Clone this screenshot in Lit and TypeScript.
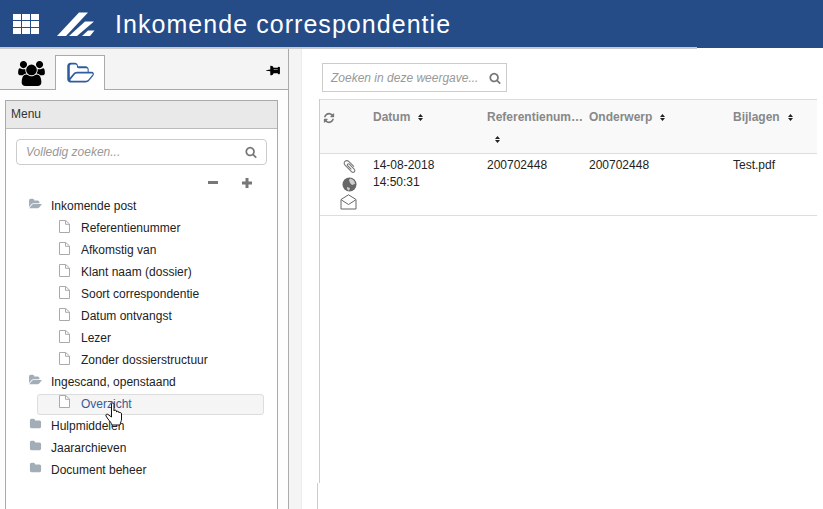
import { LitElement, html, css } from "lit";
import { customElement } from "lit/decorators.js";

const P = {
  users: "M593 896q-162 5-265 128h-134q-82 0-138-40.500t-56-118.500q0-353 124-353 6 0 43.500 21t97.500 42.500 119 21.500q67 0 133-23-5 37-5 66 0 139 81 256zm1071 637q0 120-73 189.500t-194 69.500h-874q-121 0-194-69.500t-73-189.500q0-53 3.500-103.500t14-109 26.500-108.500 43-97.500 62-81 85.500-53.500 111.500-20q10 0 43 21.500t73 48 107 48 135 21.500 135-21.500 107-48 73-48 43-21.500q61 0 111.500 20t85.500 53.500 62 81 43 97.500 26.500 108.500 14 109 3.500 103.500zm-1024-1277q0 106-75 181t-181 75-181-75-75-181 75-181 181-75 181 75 75 181zm704 384q0 159-112.500 271.500t-271.500 112.500-271.500-112.500-112.500-271.500 112.500-271.500 271.500-112.500 271.500 112.500 112.500 271.500zm576 225q0 78-56 118.500t-138 40.500h-134q-103-123-265-128 81-117 81-256 0-29-5-66 66 23 133 23 59 0 119-21.500t97.500-42.500 43.500-21q124 0 124 353zm-128-609q0 106-75 181t-181 75-181-75-75-181 75-181 181-75 181 75 75 181z",
  folderOpenO: "M1845 931q0-35-53-35h-1088q-40 0-85.500 21.500t-71.500 52.500l-294 363q-18 24-18 40 0 35 53 35h1088q40 0 86-22t71-53l294-363q18-22 18-39zm-1141-163h768v-160q0-40-28-68t-68-28h-576q-40 0-68-28t-28-68v-64q0-40-28-68t-68-28h-320q-40 0-68 28t-28 68v853l256-315q44-53 116-87.500t140-34.500zm1216 163q0 62-46 120l-295 363q-43 53-116 87.500t-140 34.500h-1088q-92 0-158-66t-66-158v-960q0-92 66-158t158-66h320q92 0 158 66t66 158v32h544q92 0 158 66t66 158v160h192q54 0 99 24.500t67 70.500q15 32 15 68z",
  folderOpen: "M1879 952q0 31-31 66l-336 396q-43 51-120.500 86.500t-143.500 35.500h-1088q-34 0-60.500-13t-26.500-43q0-31 31-66l336-396q43-51 120.500-86.500t143.500-35.500h1088q34 0 60.500 13t26.500 43zm-343-344v160h-832q-94 0-197 47.500t-164 119.500l-337 396-5 6q0-4-.5-12.500t-.5-12.500v-960q0-92 66-158t158-66h320q92 0 158 66t66 158v32h544q92 0 158 66t66 158z",
  folder: "M1728 608v704q0 92-66 158t-158 66h-1216q-92 0-158-66t-66-158v-960q0-92 66-158t158-66h320q92 0 158 66t66 158v32h672q92 0 158 66t66 158z",
  search: "M1216 832q0-185-131.500-316.500t-316.500-131.500-316.500 131.500-131.500 316.500 131.500 316.500 316.500 131.500 316.500-131.500 131.500-316.500zm512 832q0 52-38 90t-90 38q-54 0-90-38l-343-342q-179 124-399 124-143 0-273.500-55.500t-225-150-150-225-55.500-273.500 55.500-273.500 150-225 225-150 273.500-55.500 273.500 55.500 225 150 150 225 55.500 273.500q0 220-124 399l343 343q37 37 37 90z",
  clip: "M1596 1385q0 117-79 196t-196 79q-135 0-235-100l-777-776q-113-115-113-271 0-159 110-270t269-111q158 0 273 113l605 606q10 10 10 22 0 16-30.500 46.500t-46.500 30.500q-13 0-23-10l-606-607q-79-77-181-77-106 0-179 75t-73 181q0 105 76 181l776 777q63 63 145 63 64 0 106-42t42-106q0-82-63-145l-581-581q-26-24-60-24-29 0-48 19t-19 48q0 32 25 59l410 410q10 10 10 22 0 16-31 47t-47 31q-12 0-22-10l-410-410q-63-61-63-149 0-82 57-139t139-57q88 0 149 63l581 581q100 98 100 235z",
  refresh: "M1639 1056q0 5-1 7-64 268-268 434.500t-478 166.500q-146 0-282.500-55t-243.500-157l-129 129q-19 19-45 19t-45-19-19-45v-448q0-26 19-45t45-19h448q26 0 45 19t19 45-19 45l-137 137q71 66 161 102t187 36q134 0 250-65t186-179q11-17 53-117 8-23 30-23h192q13 0 22.500 9.500t9.500 22.500zm25-800v448q0 26-19 45t-45 19h-448q-26 0-45-19t-19-45 19-45l138-138q-148-137-349-137-134 0-250 65t-186 179q-11 17-53 117-8 23-30 23h-199q-13 0-22.500-9.500t-9.500-22.500v-7q65-268 270-434.500t480-166.500q146 0 284 55.500t245 156.500l130-129q19-19 45-19t45 19 19 45z",
  pin: "M800 864v-448q0-14-9-23t-23-9-23 9-9 23v448q0 14 9 23t23 9 23-9 9-23zm672 352q0 26-19 45t-45 19h-429l-51 483q-2 12-10.500 20.500t-20.500 8.500h-1q-27 0-32-27l-76-485h-404q-26 0-45-19t-19-45q0-123 78.500-221.500t177.500-98.500v-512q-52 0-90-38t-38-90 38-90 90-38h640q52 0 90 38t38 90-38 90-90 38v512q99 0 177.500 98.500t78.500 221.500z",
};

const fa = (d: string, w: number, h: number, cls = "", vb = "0 0 1792 1792") =>
  html`<svg class=${cls} width=${w} height=${h} viewBox=${vb} fill="currentColor"><path d=${d}></path></svg>`;

const fileIcon = html`<svg class="fi" width="11" height="13" viewBox="0 0 11 13" fill="#fff" stroke="#aaa"><path d="M.5.5h6.200L10.500 4V12.500H.5z"></path><path d="M6.500.5V4.300H10.500" fill="none"></path></svg>`;

const sort = html`<svg class="sort" width="5" height="7" viewBox="0 0 5 7" fill="#222"><path d="M0 3 2.500 0 5 3zM0 4 2.500 7 5 4z"></path></svg>`;

interface Node { label: string; open?: boolean; children?: string[]; }
const tree: Node[] = [
  { label: "Inkomende post", open: true, children: ["Referentienummer", "Afkomstig van", "Klant naam (dossier)", "Soort correspondentie", "Datum ontvangst", "Lezer", "Zonder dossierstructuur"] },
  { label: "Ingescand, openstaand", open: true, children: ["Overzicht"] },
  { label: "Hulpmiddelen" },
  { label: "Jaararchieven" },
  { label: "Document beheer" },
];

@customElement("app-root")
export class AppRoot extends LitElement {
  static styles = css`
    :host { display: block; position: relative; width: 823px; height: 509px; overflow: hidden; background: #fff;
      font-family: "Liberation Sans", Arial, sans-serif; font-size: 12px; color: #222; }
    * { box-sizing: border-box; }
    svg { display: block; flex: none; }
    .top { height: 48px; background: #254c87; display: flex; align-items: center; color: #fff; position: relative; }
    .top::after { content: ""; position: absolute; left: 0; top: 47px; width: 697px; height: 2px; background: #c9c9c9; }
    .grid { margin-left: 13px; display: grid; grid-template-columns: repeat(3, 8px); grid-auto-rows: 6px; gap: 1px; }
    .grid i { background: #fff; }
    .logo { margin-left: 18px; }
    .title { margin-left: 20px; font-size: 25px; letter-spacing: 1.05px; line-height: 46px; }
    .body { display: flex; height: 461px; }
    .left { width: 289px; border-right: 1px solid #aaa; background: #fdfdfd; display: flex; flex-direction: column; }
    .tabs { height: 42px; background: #f4f4f4; border-bottom: 1px solid #aaa; display: flex; align-items: flex-end; }
    .t1 { width: 55px; height: 41px; display: flex; justify-content: center; align-items: center; padding: 9px 0 0 7px; color: #000; }
    .t2 { width: 50px; height: 35px; background: #fff; border: 1px solid #aaa; border-bottom: 0; margin-bottom: -1px; display: flex; align-items: center; justify-content: center; color: #2e5c9f; }
    .pin { margin-left: auto; margin-right: 7px; margin-top: 3px; align-self: center; color: #000; transform: rotate(90deg); }
    .menu { margin: 10px 10px 0 5px; flex: 1; background: #fff; border: 1px solid #aaa; border-bottom: 0; display: flex; flex-direction: column; }
    .mh { height: 28px; background: #e9e9e9; border-bottom: 1px solid #bbb; padding-left: 5px; line-height: 26px; color: #333; }
    .ms { margin: 10px 10px 0 10px; height: 26px; border: 1px solid #ccc; border-radius: 4px; display: flex; align-items: center; padding: 0 9px 0 9px; color: #999; font-style: italic; justify-content: space-between; }
    .ms svg, .vs svg { color: #777; }
    .ctl { display: flex; justify-content: flex-end; gap: 24px; padding-right: 25px; margin-top: 12px; height: 11px; align-items: center; }
    .tree { margin-top: 7px; display: flex; flex-direction: column; }
    .row { height: 22px; display: flex; line-height: 22px; }
    .l1 { padding-left: 23px; }
    .l1 .ico { width: 22px; color: #a3adb8; padding-top: 3px; }
    .l2 { margin-left: 31px; width: 227px; padding-left: 21px; border: 1px solid transparent; }
    .l2 .fi { margin-top: 2px; }
    .l2 span { margin-left: 11px; line-height: 20px; }
    .hover { background: #f5f5f5; border-color: #ddd; border-radius: 3px; height: 21px; margin-top: 1px; color: #3b5a95; }
    .hover .fi { margin-top: 0; }
    .hover span { line-height: 18px; }
    .strip { width: 13px; background: #f4f4f4; border-right: 1px solid #ececec; }
    .main { flex: 1; display: flex; flex-direction: column; padding-left: 17px; }
    .vs { margin: 15px 0 0 3px; width: 185px; height: 29px; flex: none; border: 1px solid #ccc; color: #999; font-style: italic; display: flex; align-items: center; justify-content: space-between; padding: 0 5px 0 8px; }
    .table { margin-top: 7px; height: 384px; width: 498px; flex: none; border-left: 1px solid #ccc; }
    .thead, .tr { display: grid; grid-template-columns: 47px 114px 102px 144px 90px; }
    .thead { height: 55px; background: #f9f9f9; border-top: 1px solid #ddd; border-bottom: 1px solid #ddd; color: #888; font-weight: bold; line-height: 17px; padding-top: 9px; }
    .th { padding-left: 6px; min-width: 0; display: flex; align-items: flex-start; }
    .th span { white-space: nowrap; }
    .th .sort { margin: 5px 0 0 8px; }
    .th.wrap { display: block; }
    .th.wrap span { display: block; }
    .th.wrap .sort { margin: 10px 0 0 8px; }
    .th.ref { color: #777; padding: 3px 0 0 3px; }
    .tr { height: 62px; border-bottom: 1px solid #ddd; padding-top: 3px; line-height: 17px; }
    .td { padding-left: 6px; }
    .ics { display: flex; flex-direction: column; align-items: flex-end; color: #777; padding-right: 10px; padding-top: 2px; gap: 3px; }
    .ics .env { margin-top: -1px; }
    .below { flex: 1; margin-left: -2px; border-left: 1px solid #ccc; }
    .cursor { position: absolute; left: 105px; top: 402px; }
  `;

  render() {
    return html`
      <div class="top">
        <div class="grid">${Array.from({ length: 9 }, () => html`<i></i>`)}</div>
        <svg class="logo" width="38" height="25" viewBox="0 0 38 25" fill="#fff"><path d="M0 24 22 0.500H31L9 24zM12 24 28 9.500H37L20 24zM25 24 31 18.500H37.500L33 24z"></path></svg>
        <div class="title">Inkomende correspondentie</div>
      </div>
      <div class="body">
        <div class="left">
          <div class="tabs">
            <div class="t1">${fa(P.users, 27, 25, "", "0 0 1920 1792")}</div>
            <div class="t2">${fa(P.folderOpenO, 27, 25, "", "0 0 1920 1792")}</div>
            ${fa(P.pin, 15, 15, "pin")}
          </div>
          <div class="menu">
            <div class="mh">Menu</div>
            <div class="ms">Volledig zoeken...${fa(P.search, 12, 12)}</div>
            <div class="ctl">
              <svg width="10" height="3" fill="#777"><rect width="10" height="3"></rect></svg>
              <svg width="10" height="10" fill="#777"><path d="M0 3.500H3.500V0H6.500V3.500H10V6.500H6.500V10H3.500V6.500H0z"></path></svg>
            </div>
            <div class="tree">
              ${tree.map((n) => html`
                <div class="row l1"><div class="ico">${fa(n.open ? P.folderOpen : P.folder, 13, 12, "", n.open ? "0 0 1920 1792" : "0 0 1792 1792")}</div>${n.label}</div>
                ${(n.children || []).map((c) => html`<div class="row l2 ${c === "Overzicht" ? "hover" : ""}">${fileIcon}<span>${c}</span></div>`)}
              `)}
            </div>
          </div>
        </div>
        <div class="strip"></div>
        <div class="main">
          <div class="vs">Zoeken in deze weergave...${fa(P.search, 12, 12)}</div>
          <div class="table">
            <div class="thead">
              <div class="th ref">${fa(P.refresh, 12, 12)}</div>
              <div class="th"><span>Datum</span>${sort}</div>
              <div class="th wrap"><span>Referentienum…</span>${sort}</div>
              <div class="th"><span>Onderwerp</span>${sort}</div>
              <div class="th"><span>Bijlagen</span>${sort}</div>
            </div>
            <div class="tr">
              <div class="ics">
                ${fa(P.clip, 15, 15)}
                <svg width="15" height="15" viewBox="0 0 15 15"><circle cx="7.500" cy="7.500" r="7" fill="#666"></circle><path d="M8 1.500C11 2 13 4 13 7L10 8 8 6 7 3zM5 10l3 1-1 3-2-2z" fill="#ccc"></path></svg>
                <svg class="env" width="17" height="16" viewBox="0 0 17 16" fill="none" stroke="#666"><path d="M1 5.500 8.500.8 16 5.500V15H1zM1.500 6 8.500 10.500 15.500 6"></path></svg>
              </div>
              <div class="td">14-08-2018<br />14:50:31</div>
              <div class="td">200702448</div>
              <div class="td">200702448</div>
              <div class="td">Test.pdf</div>
            </div>
          </div>
          <div class="below"></div>
        </div>
      </div>
      <svg class="cursor" width="19" height="24" viewBox="0 0 19 24" fill="#fff" stroke="#111"><path d="M6.500 2C6.500.5 9 .5 9 2V9C9 7.800 11.500 7.800 11.500 9V10C11.500 9 14 9 14 10.500V11C14 10 16.500 10.200 16.500 12V17C16.500 19 15.500 20.500 15 23H7C6.500 21 5 19.500 3 17L1 14C.3 12.500 2 11.500 3 12.500L6.500 15z"></path></svg>
    `;
  }
}
